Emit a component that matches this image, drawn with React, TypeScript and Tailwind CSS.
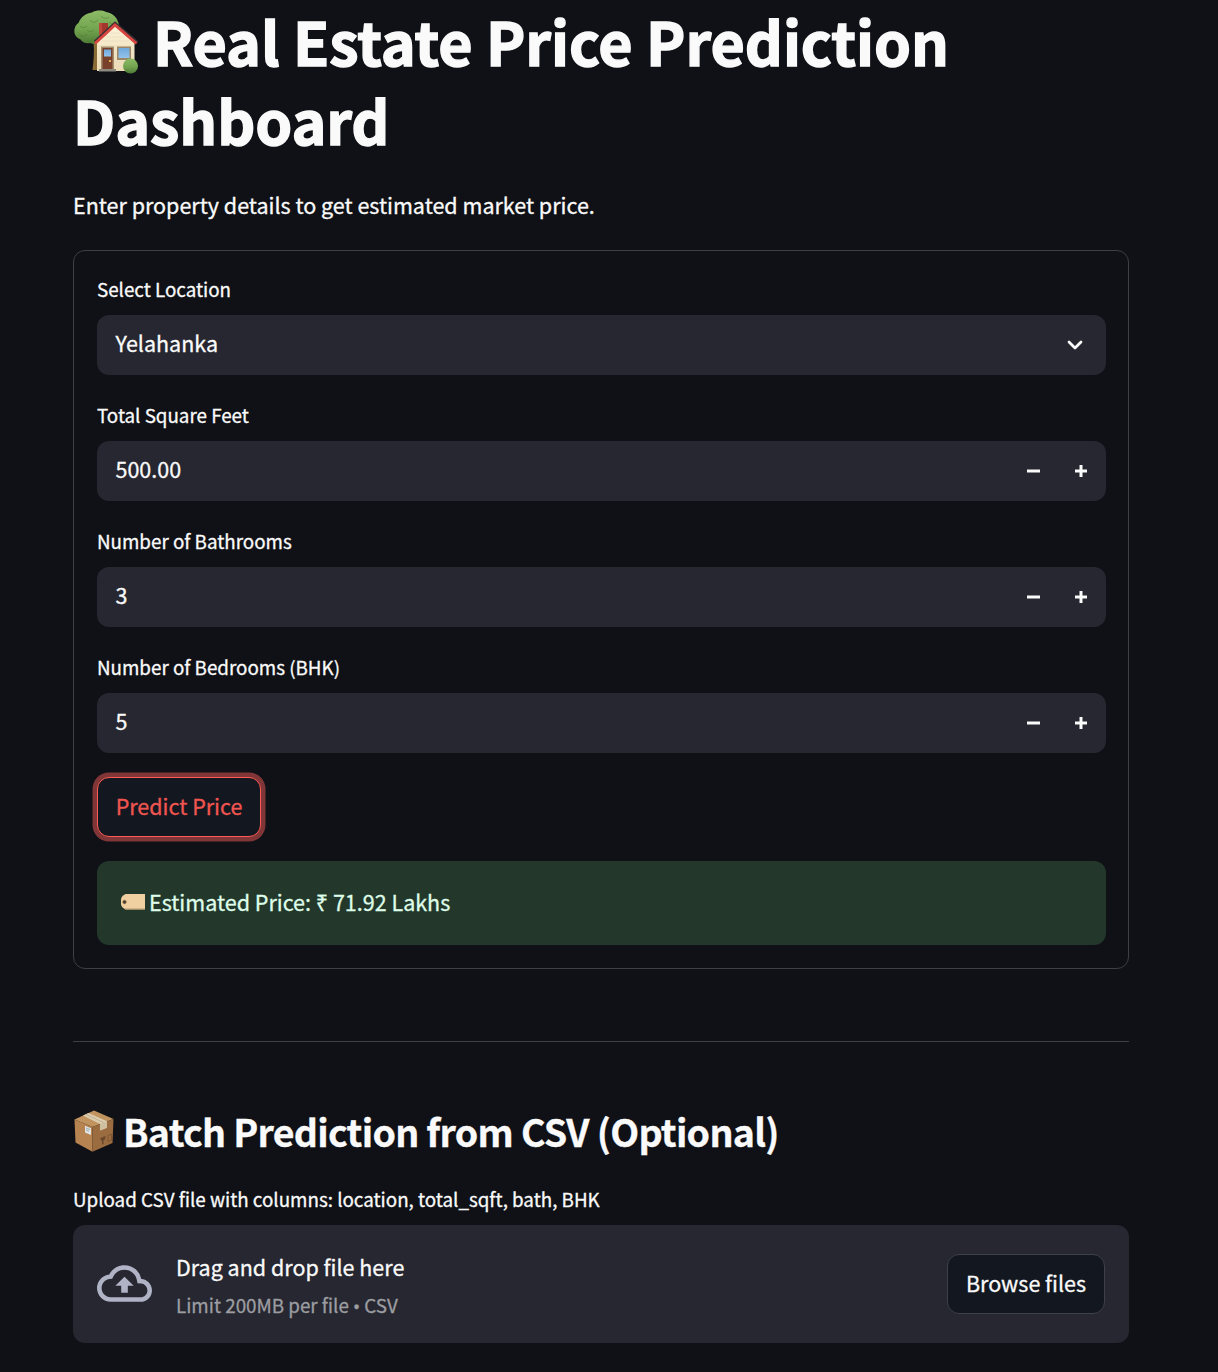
import type { ReactNode } from "react";

function HouseIcon() {
  return (
    <svg width="66" height="66" viewBox="0 0 66 66" className="block shrink-0">
      <defs>
        <linearGradient id="leaf" x1="0" y1="0" x2="0" y2="1">
          <stop offset="0" stopColor="#8dbb66" />
          <stop offset="0.55" stopColor="#73a550" />
          <stop offset="1" stopColor="#4d7a35" />
        </linearGradient>
        <linearGradient id="pane" x1="0" y1="0" x2="0" y2="1">
          <stop offset="0" stopColor="#6fa8dc" />
          <stop offset="1" stopColor="#93c3ec" />
        </linearGradient>
        <linearGradient id="wall" x1="0" y1="0" x2="0" y2="1">
          <stop offset="0" stopColor="#fbf1d6" />
          <stop offset="1" stopColor="#ecdcb6" />
        </linearGradient>
      </defs>
      <path d="M20.500 32h5v28h-6c1-9 2-18 1-28z" fill="#8a6a35" />
      <path
        d="M1.500 23c-.5-5 1-8 4-10C8 7 12 3.500 19 2.500c4-2.500 10-2.500 14-.500 6 1 11 5 12 10 3 5 1 12-3 15-4 4-10 6-16 6-2 1.500-6 1.500-9 0-4 1-8-1-9.500-3.500C4 28 2 26 1.500 23z"
        fill="url(#leaf)"
      />
      <path
        d="M7 16c2 2 5 2 7 0M17 10c2 3 5 3 8 0M6 24c2 3 6 3 8 0M28 6c3 3 6 3 8 1M14 20c2 2 5 2 7 0M14 30c2 2 5 1 7-1M36 12c2 2 5 2 6 0"
        fill="none"
        stroke="#4c7b30"
        strokeWidth="1"
        opacity=".55"
      />
      <path d="M26 13h9v12l-9 4z" fill="#a3362d" />
      <path d="M26 13h3v13l-3 2z" fill="#bd473b" />
      <path d="M24 33l18-17 19.500 17v28H24z" fill="url(#wall)" />
      <path d="M25 36h36M25 40h36M25 44h36M25 48h36M25 52h36M25 56h36M29 31h27M33 27h18M37 23h10" stroke="#e3d7b8" strokeWidth=".5" />
      <path d="M21.500 31.500L42 12.500l22.500 19.500" fill="none" stroke="#3a3034" strokeWidth="2" />
      <path d="M22 33.500L42 15l21.500 18.500" fill="none" stroke="#d9453f" strokeWidth="2.800" />
      <path d="M28 36.500h13V60H28z" fill="#a38d6f" />
      <path d="M29.500 38h10v22h-10z" fill="#78412b" />
      <rect x="31" y="39.500" width="7" height="7" fill="url(#pane)" />
      <circle cx="37" cy="51" r="1.100" fill="#f1c75b" />
      <rect x="44" y="36.500" width="14" height="13.500" fill="#9d8665" />
      <rect x="45.500" y="38" width="11" height="10" fill="url(#pane)" />
      <path d="M26 59h17v2.500H26z" fill="#8d8a80" />
      <circle cx="57.500" cy="56" r="7.500" fill="url(#leaf)" />
    </svg>
  );
}

function BoxIcon() {
  return (
    <svg width="42" height="42" viewBox="0 0 42 42" className="block shrink-0">
      <path d="M1.500 9.500L21 .400l19.500 8.600L19.500 17z" fill="#c1935f" />
      <path d="M1.500 9.500L19.500 17V41.800L2.500 32.500z" fill="#b78451" />
      <path d="M19.500 17l21-8L39.500 33l-20 8.800z" fill="#9b6c40" />
      <path d="M10 5.500l5.500-2.600L34 11.300v6.500L27 20.500v-6.400z" fill="#dccdb0" />
      <path d="M27 14.100l7-2.800v6.500l-7 2.700z" fill="#cfc0a2" />
      <path d="M12.700 4.300l18 8.300" stroke="#bca987" strokeWidth=".8" />
      <path d="M12 15.800l6 2.400v6.800l-6-2.600z" fill="#dfe3e4" />
      <path d="M13 18l4 1.500M13 20l3 1.200" stroke="#8da0a7" strokeWidth=".8" />
      <path d="M27.500 28l5-2c0 3-1 4-2 4.500v3l1 0-2.500 1v-3.700c-1 0-1.500-1-1.500-2.800z" fill="#69472d" />
      <path d="M35 25.500l3.500-1.300v6L35 31.500z" fill="none" stroke="#76502f" strokeWidth=".8" />
    </svg>
  );
}

function TagIcon() {
  return (
    <svg width="24" height="16" viewBox="0 0 24 16" className="block shrink-0">
      <path d="M4.500 0H24v15.500H4.500C1.500 14 0 12 0 10V5.500C0 3.500 1.500 1.500 4.500 0z" fill="#f0cfa0" />
      <path d="M4.500 15.500H24v-1H3z" fill="#b39a73" />
      <circle cx="3.500" cy="8" r="1.900" fill="#433c34" stroke="#b9925f" strokeWidth=".7" />
    </svg>
  );
}

function Label({ children }: { children: ReactNode }) {
  return <div className="h-[42px] whitespace-nowrap text-[18.8px] leading-[31px]">{children}</div>;
}

function NumberField({ label, value }: { label: string; value: string }) {
  return (
    <div>
      <Label>{label}</Label>
      <div className="flex h-[60px] items-center rounded-xl bg-[#262730] pl-[18.5px] text-[21.5px]">
        <span className="mb-[4px] flex-1 leading-[54px]">{value}</span>
        <button aria-label="Decrease" className="flex h-full w-12 items-center justify-center">
          <svg width="13" height="12" viewBox="0 0 13 12" fill="#fafafa">
            <path d="M0 4.500h13v3H0z" />
          </svg>
        </button>
        <button aria-label="Increase" className="mr-px flex h-full w-12 items-center justify-center">
          <svg width="12" height="12" viewBox="0 0 12 12" fill="#fafafa">
            <path d="M0 4.500h4.500V0h3v4.500H12v3H7.500V12h-3V7.500H0z" />
          </svg>
        </button>
      </div>
    </div>
  );
}

export default function App() {
  return (
    <div className="h-[1372px] bg-[#0f1116] pl-[73px] pr-[89px] pt-[1px] font-['Noto_Sans_CJK_SC','Noto_Sans',sans-serif] text-[21.5px] text-[#fafafa] [-webkit-text-stroke:0.3px_currentColor]">
      <h1 className="text-[59.2px] font-bold leading-[79px] tracking-[-0.06px] [-webkit-text-stroke:1.4px_currentColor]">
        <span className="flex h-[79px]">
          <span className="mr-[14px] pt-[9px]">
            <HouseIcon />
          </span>
          <span className="whitespace-nowrap">Real Estate Price Prediction</span>
        </span>
        <span className="block">Dashboard</span>
      </h1>
      <p className="mt-[28px] h-9 whitespace-nowrap leading-9">Enter property details to get estimated market price.</p>

      <section className="mt-[27px] h-[719px] rounded-xl border border-[#3e3f44] pl-[23px] pr-[22px] pt-[22px]">
        <div className="flex flex-col gap-6">
          <div>
            <Label>Select Location</Label>
            <div className="flex h-[60px] items-center justify-between rounded-xl bg-[#262730] pl-[18.5px] pr-[23px]">
              <span className="mb-[4px] leading-[54px]">Yelahanka</span>
              <svg width="16" height="10" viewBox="0 0 16 10" fill="none" stroke="#fafafa" strokeWidth="2.800" strokeLinecap="round" strokeLinejoin="round">
                <path d="M2 2l6 6 6-6" />
              </svg>
            </div>
          </div>
          <NumberField label="Total Square Feet" value="500.00" />
          <NumberField label="Number of Bathrooms" value="3" />
          <NumberField label="Number of Bedrooms (BHK)" value="5" />
          <button className="flex h-[60px] w-[164px] items-center justify-center whitespace-nowrap rounded-xl border border-[#ff5a55] bg-[#131720] pb-[2px] text-[#f05550] shadow-[0_0_0_4.500px_#803537]">
            Predict Price
          </button>
          <div className="flex h-[84px] items-center rounded-xl bg-[#23382b] pl-6 text-[#dffde9]">
            <span className="mb-[3px] mr-1">
              <TagIcon />
            </span>
            <span className="mb-[2px] whitespace-nowrap">Estimated Price: ₹ 71.92 Lakhs</span>
          </div>
        </div>
      </section>

      <hr className="mt-[72px] border-[#3e3f44]" />

      <h2 className="mt-[64px] flex h-[50px] text-[37.6px] font-bold leading-[50px] tracking-[-0.73px]">
        <span className="mr-2 pt-[4px]">
          <BoxIcon />
        </span>
        <span className="whitespace-nowrap">Batch Prediction from CSV (Optional)</span>
      </h2>

      <div className="mt-[27px]">
        <Label>Upload CSV file with columns: location, total_sqft, bath, BHK</Label>
        <div className="flex h-[118px] items-center rounded-xl bg-[#262730] px-6">
          <svg width="55" height="55" viewBox="0 0 24 24" fill="#b0b3c5" className="mb-[2px] shrink-0">
            <path d="M19.350 10.040A7.490 7.490 0 0 0 12 4C9.110 4 6.600 5.640 5.350 8.040A5.994 5.994 0 0 0 0 14c0 3.310 2.690 6 6 6h13c2.760 0 5-2.240 5-5 0-2.640-2.050-4.780-4.650-4.960zM19 18H6c-2.210 0-4-1.790-4-4 0-2.050 1.530-3.760 3.560-3.970l1.070-.11.5-.95A5.469 5.469 0 0 1 12 6c2.620 0 4.880 1.860 5.390 4.430l.3 1.500 1.530.11A2.980 2.980 0 0 1 22 15c0 1.650-1.350 3-3 3zM8 13h2.550v3h2.900v-3H16l-4-4z" />
          </svg>
          <div className="ml-6 flex-1 whitespace-nowrap pt-[2px]">
            <div className="h-[38px] leading-9">Drag and drop file here</div>
            <div className="h-[34px] text-[18.8px] leading-9 text-[#9c9da1]">
              Limit 200MB per file <span className="font-['Noto_Sans']">•</span> CSV
            </div>
          </div>
          <button className="flex h-[60px] w-[158px] items-center justify-center whitespace-nowrap rounded-xl border border-[#3e4049] bg-[#131720] pb-[2px]">
            Browse files
          </button>
        </div>
      </div>
    </div>
  );
}
